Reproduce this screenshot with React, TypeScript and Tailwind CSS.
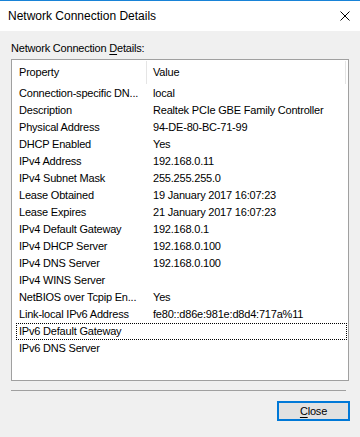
import React from "react";

const rows: [string, string][] = [
  ["Connection-specific DN...", "local"],
  ["Description", "Realtek PCIe GBE Family Controller"],
  ["Physical Address", "94-DE-80-BC-71-99"],
  ["DHCP Enabled", "Yes"],
  ["IPv4 Address", "192.168.0.11"],
  ["IPv4 Subnet Mask", "255.255.255.0"],
  ["Lease Obtained", "19 January 2017 16:07:23"],
  ["Lease Expires", "21 January 2017 16:07:23"],
  ["IPv4 Default Gateway", "192.168.0.1"],
  ["IPv4 DHCP Server", "192.168.0.100"],
  ["IPv4 DNS Server", "192.168.0.100"],
  ["IPv4 WINS Server", ""],
  ["NetBIOS over Tcpip En...", "Yes"],
  ["Link-local IPv6 Address", "fe80::d86e:981e:d8d4:717a%11"],
  ["IPv6 Default Gateway", ""],
  ["IPv6 DNS Server", ""],
];

export default function App() {
  return (
    <div
      className="w-[360px] h-[437px] bg-[#f0f0f0] flex flex-col text-black overflow-hidden"
      style={{ fontFamily: '"Liberation Sans", Arial, sans-serif' }}
    >
      {/* Title bar */}
      <div className="h-[31px] bg-white border-t border-[#1883d7] flex items-center pl-[8px] pr-[10px] shrink-0">
        <span className="text-[12px] leading-[14px] flex-1">Network Connection Details</span>
        <svg width="10" height="10" viewBox="0 0 10 10" className="shrink-0">
          <path d="M0.5 0.5 L9.5 9.5 M9.5 0.5 L0.5 9.5" stroke="#000" strokeWidth="1" fill="none" />
        </svg>
      </div>

      <div className="flex flex-col px-[11px] text-[11px] tracking-[-0.2px]">
        <div className="mt-[11px] leading-[13px]">
          Network Connection <span className="underline underline-offset-[2px]">D</span>etails:
        </div>

        {/* List view */}
        <div className="mt-[4px] h-[322px] bg-white border border-[#a0a0a0] flex flex-col">
          <div className="h-[25px] grid grid-cols-[135px_199px_1fr] items-center">
            <div className="pl-[7px] h-[23px] flex items-center border-r border-[#e5e5e5]">Property</div>
            <div className="pl-[6px] h-[23px] flex items-center border-r border-[#e5e5e5]">Value</div>
            <div />
          </div>
          {rows.map(([k, v], i) => (
            <div key={i} className="relative h-[17px] grid grid-cols-[135px_1fr] items-center leading-[17px]">
              {i === 14 && (
                <span className="absolute left-[4px] right-[1px] top-0 bottom-0 border border-dotted border-black" />
              )}
              <div className="pl-[7px] whitespace-nowrap overflow-hidden">{k}</div>
              <div className="pl-[6px] whitespace-nowrap overflow-hidden">{v}</div>
            </div>
          ))}
        </div>

        {/* Separator */}
        <div className="mt-[9px] mr-[3px] h-px bg-[#a0a0a0]" />

        <div className="flex justify-end mt-[10px] mr-[-1px]">
          <button className="w-[73px] h-[20px] bg-[#e1e1e1] border-2 border-[#0078d7] flex items-center justify-center text-[11px] leading-[13px]">
            <span>
              <span className="underline underline-offset-[2px]">C</span>lose
            </span>
          </button>
        </div>
      </div>
    </div>
  );
}
